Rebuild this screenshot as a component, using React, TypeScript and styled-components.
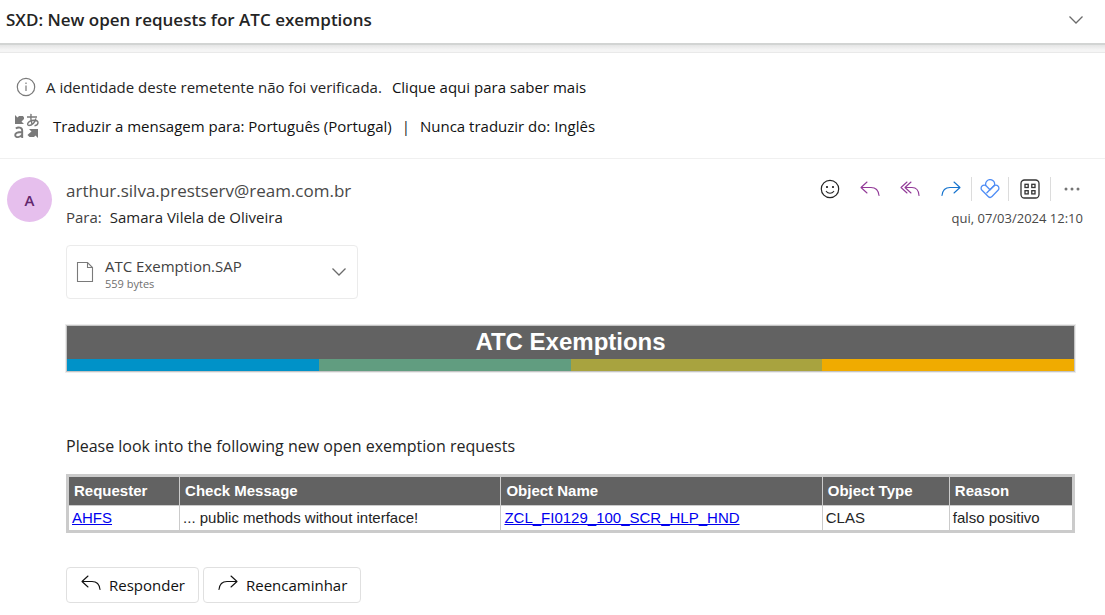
import React from "react";
import styled, { createGlobalStyle } from "styled-components";

const GlobalStyle = createGlobalStyle`
  * { box-sizing: border-box; }
  body {
    margin: 0;
    background: #ffffff;
    color: #242424;
    font-family: "Open Sans", "Noto Sans", sans-serif;
    font-size: 15px;
    line-height: 20px;
  }
  button { font: inherit; color: inherit; background: none; border: 0; padding: 0; cursor: pointer; }
`;

const Header = styled.header`
  display: flex;
  align-items: center;
  justify-content: space-between;
  height: 43px;
  padding: 0 21px 3px 6px;
`;

const Subject = styled.h1`
  margin: 0;
  font-size: 17px;
  line-height: 24px;
  font-weight: 600;
`;

const IconButton = styled.button<{ $color?: string }>`
  && {
    display: flex;
    align-items: center;
    justify-content: center;
    color: ${(p) => p.$color ?? "#6b6b6b"};
  }
`;

const Divider = styled.div`
  height: 10px;
  border-top: 2px solid #d2d4d3;
  border-bottom: 1px solid #e9e9e9;
  background: linear-gradient(#e4e5e5, #f5f5f5 70%);
`;

const Notices = styled.section`
  display: flex;
  flex-direction: column;
  gap: 12px;
  padding: 20px 14px 19px;
  border-bottom: 1px solid #f0f0f0;
`;

const Notice = styled.div<{ $gap: number }>`
  display: flex;
  align-items: center;
  gap: ${(p) => p.$gap}px;
  min-height: 27px;
  color: #242424;
`;

const NoticeIcon = styled.span<{ $width: number }>`
  display: flex;
  justify-content: center;
  width: ${(p) => p.$width}px;
  color: #7a7a7a;
`;

const NoticeText = styled.span`
  display: flex;
  gap: 10px;
`;

const PlainLink = styled.a`
  color: #111111;
  text-decoration: none;
`;

const Message = styled.main`
  display: grid;
  grid-template-columns: 46px minmax(0, 1fr);
  column-gap: 13px;
  padding: 18px 22px 0 7px;
`;

const Avatar = styled.div`
  display: flex;
  align-items: center;
  justify-content: center;
  width: 45px;
  height: 45px;
  border-radius: 50%;
  background: #e6bfed;
  color: #63276d;
  font-weight: 600;
`;

const MessageHead = styled.div`
  display: flex;
  justify-content: space-between;
`;

const Sender = styled.div`
  padding-top: 2px;
  font-size: 17px;
  line-height: 24px;
  color: #484848;
`;

const Recipients = styled.div`
  display: flex;
  gap: 8px;
  padding-top: 4px;
  color: #424242;
`;

const Recipient = styled.span`
  color: #242424;
`;

const Aside = styled.div`
  display: flex;
  flex-direction: column;
  align-items: flex-end;
`;

const Toolbar = styled.div`
  display: flex;
  align-items: center;
  height: 24px;
  margin-right: -9px;
`;

const ToolSlot = styled.div<{ $width: number; $ruled?: boolean }>`
  display: flex;
  align-items: center;
  justify-content: center;
  width: ${(p) => p.$width}px;
  height: 24px;
  border-left: ${(p) => (p.$ruled ? "1px solid #dcdcdc" : "0")};
`;

const Sent = styled.time`
  padding-top: 7px;
  font-size: 13px;
  color: #484848;
`;

const Attachment = styled.div`
  display: flex;
  align-items: center;
  width: 292px;
  height: 54px;
  margin-top: 17px;
  padding: 0 10px 0 9px;
  border: 1px solid #ebebeb;
  border-radius: 4px;
`;

const AttachmentInfo = styled.div`
  flex: 1;
  padding: 3px 0 0 11px;
`;

const FileName = styled.div`
  line-height: 20px;
  color: #424242;
`;

const FileSize = styled.div`
  font-size: 11px;
  line-height: 16px;
  font-weight: 500;
  color: #707070;
`;

const Body = styled.article`
  padding-right: 8px;
`;

const Banner = styled.div`
  display: grid;
  grid-template-columns: repeat(4, 1fr);
  margin-top: 26px;
  border: 1px solid #c4c4c4;
  outline: 1px solid #ececec;
`;

const BannerTitle = styled.h2`
  grid-column: 1 / -1;
  margin: 0;
  padding-bottom: 1px;
  background: #626262;
  color: #ffffff;
  font: bold 24px/32px "Liberation Sans", Arial, sans-serif;
  text-align: center;
`;

const Stripe = styled.div<{ $color: string }>`
  height: 12px;
  background: ${(p) => p.$color};
`;

const Intro = styled.p`
  margin: 62px 0 16px;
  font-size: 16px;
  line-height: 24px;
`;

const Table = styled.table`
  width: 100%;
  table-layout: fixed;
  border: 2px solid #cbcbcb;
  border-collapse: separate;
  border-spacing: 1px;
  background: #cbcbcb;
  font: 15px/20px "Liberation Sans", Arial, sans-serif;
`;

const HeadCell = styled.th<{ $width: string }>`
  width: ${(p) => p.$width};
  height: 28px;
  padding: 0 5px;
  background: #626262;
  color: #ffffff;
  text-align: left;
`;

const Cell = styled.td`
  height: 24px;
  padding: 0 3px;
  background: #ffffff;
`;

const TableLink = styled.a`
  color: #0000ee;
`;

const Actions = styled.div`
  display: flex;
  gap: 4px;
  margin-top: 34px;
`;

const ActionButton = styled.button`
  && {
    display: flex;
    align-items: center;
    gap: 8px;
    height: 36px;
    padding: 0 13px 0 14px;
    border: 1px solid #e0e0e0;
    border-radius: 4px;
    font-weight: 500;
    color: #111111;
  }
  svg {
    margin-bottom: 4px;
  }
`;

const Chevron = () => (
  <svg width="16" height="10" viewBox="0 0 16 10" fill="none" stroke="currentColor" strokeWidth="1.3">
    <path d="M1.500 1.500 8 8l6.500-6.500" />
  </svg>
);

const ReplyIcon = () => (
  <svg width="20" height="16" viewBox="0 0 20 16" fill="none" stroke="currentColor" strokeWidth="1.1" strokeLinecap="round" strokeLinejoin="round">
    <path d="M7 1 1 6.500 7 12M1.300 6.500H11c4.500 0 7.500 3 8 8" />
  </svg>
);

const ReplyAllIcon = () => (
  <svg width="20" height="16" viewBox="0 0 20 16" fill="none" stroke="currentColor" strokeWidth="1.1" strokeLinecap="round" strokeLinejoin="round">
    <path d="M7 1 1 6.500 7 12M11 1 5 6.500 11 12M5.300 6.500H12c4 0 6.700 3 7 8" />
  </svg>
);

const ForwardIcon = () => (
  <svg width="20" height="16" viewBox="0 0 20 16" fill="none" stroke="currentColor" strokeWidth="1.1" strokeLinecap="round" strokeLinejoin="round">
    <path d="m13 1 6 5.500L13 12M18.700 6.500H9C4.500 6.500 1.500 9.500 1 14.500" />
  </svg>
);

const SmileIcon = () => (
  <svg width="20" height="20" viewBox="0 0 20 20" fill="none" stroke="currentColor" strokeWidth="1.2" strokeLinecap="round">
    <circle cx="10" cy="10" r="8.700" />
    <path d="M6.300 12.500c1.800 2.300 5.600 2.300 7.400 0" />
    <circle cx="7" cy="8" r=".5" fill="currentColor" />
    <circle cx="13" cy="8" r=".5" fill="currentColor" />
  </svg>
);

const VivaIcon = () => (
  <svg width="20" height="20" viewBox="0 0 20 20" fill="none" stroke="currentColor" strokeWidth="1.3" strokeLinecap="round" strokeLinejoin="round">
    <path d="M5.800 6.300a4.500 4.500 0 1 1 8.600.2" />
    <path d="M10 10.700 6.300 7a3 3 0 0 0-4.300 0 3 3 0 0 0 0 4.300l6.200 6.200a2.700 2.700 0 0 0 3.800 0l6-6.200a3 3 0 0 0 0-4.300 3 3 0 0 0-4.300 0l-6.800 6.800" />
    <path d="M14.400 6.500 10 10.700" />
  </svg>
);

const AppsIcon = () => (
  <svg width="20" height="20" viewBox="0 0 20 20" fill="none" stroke="currentColor" strokeWidth="1.3">
    <rect x="1" y="1" width="18" height="18" rx="3.500" />
    <rect x="5" y="5.300" width="3.200" height="3.200" />
    <rect x="11.800" y="5.300" width="3.200" height="3.200" />
    <rect x="5" y="11.700" width="3.200" height="3.200" />
    <rect x="11.800" y="11.700" width="3.200" height="3.200" />
  </svg>
);

const MoreIcon = () => (
  <svg width="16" height="4" viewBox="0 0 16 4" fill="currentColor">
    <circle cx="2" cy="2" r="1.500" />
    <circle cx="8" cy="2" r="1.500" />
    <circle cx="14" cy="2" r="1.500" />
  </svg>
);

const InfoIcon = () => (
  <svg width="20" height="20" viewBox="0 0 20 20" fill="none" stroke="currentColor" strokeWidth="1.200">
    <circle cx="10" cy="10" r="8.700" />
    <path d="M10 8.500V14M10 5.500v1.500" />
  </svg>
);

const TranslateIcon = () => (
  <svg width="26" height="26" viewBox="0 0 26 26" fill="none" stroke="currentColor" strokeWidth="1.400">
    <path d="M1 2v9h9L7.500 8.500 10 6V4.500L9 3H5L3.500 4.500zM24 25v-9h-9l2.500 2.500L14.500 21l-1 1 2 2H20l1.500-1.500z" fill="currentColor" stroke="none" />
    <path d="M13 4h10M17 .8c-.5 4 0 7.500 1 10.500M22 5.500c-1.500 4.500-4.500 7-7 7-2.500 0-2-4.700 5-5.200 5.500 0 5 4.700.5 5.400" />
    <path d="M1.800 15.500c2.500-1.800 6.400-1.200 6.400 2V25M8.200 19c-3.200 0-7 .2-7 3.100 0 3 5.500 2.600 7-.7" strokeWidth="1.900" />
  </svg>
);

const FileIcon = () => (
  <svg width="18" height="22" viewBox="0 0 18 22" fill="none" stroke="currentColor" strokeWidth="1.100">
    <path d="M1.500 1.500h10L16.500 6.500v14h-15zM11.500 1.500v5h5" />
  </svg>
);

const columns = [
  { label: "Requester", width: "11%" },
  { label: "Check Message", width: "32%" },
  { label: "Object Name", width: "32%" },
  { label: "Object Type", width: "12.6%" },
  { label: "Reason", width: "12.2%" },
];

const stripes = ["#0092c8", "#619d80", "#a8a33f", "#f0ab00"];

export default function App() {
  return (
    <>
      <GlobalStyle />
      <Header>
        <Subject>SXD: New open requests for ATC exemptions</Subject>
        <IconButton aria-label="Expandir"><Chevron /></IconButton>
      </Header>
      <Divider />
      <Notices>
        <Notice $gap={8}>
          <NoticeIcon $width={24}><InfoIcon /></NoticeIcon>
          <NoticeText>
            <span>A identidade deste remetente não foi verificada.</span>
            <PlainLink href="#saber-mais">Clique aqui para saber mais</PlainLink>
          </NoticeText>
        </Notice>
        <Notice $gap={13}>
          <NoticeIcon $width={26}><TranslateIcon /></NoticeIcon>
          <NoticeText>
            <PlainLink href="#traduzir">Traduzir a mensagem para: Português (Portugal)</PlainLink>
            <span>|</span>
            <PlainLink href="#nunca">Nunca traduzir do: Inglês</PlainLink>
          </NoticeText>
        </Notice>
      </Notices>
      <Message>
        <Avatar>A</Avatar>
        <div>
          <MessageHead>
            <div>
              <Sender>arthur.silva.prestserv@ream.com.br</Sender>
              <Recipients>
                <span>Para:</span>
                <Recipient>Samara Vilela de Oliveira</Recipient>
              </Recipients>
            </div>
            <Aside>
              <Toolbar>
                <ToolSlot $width={40}><IconButton aria-label="Reagir" $color="#242424"><SmileIcon /></IconButton></ToolSlot>
                <ToolSlot $width={40}><IconButton aria-label="Responder" $color="#923a98"><ReplyIcon /></IconButton></ToolSlot>
                <ToolSlot $width={40}><IconButton aria-label="Responder a todos" $color="#923a98"><ReplyAllIcon /></IconButton></ToolSlot>
                <ToolSlot $width={41}><IconButton aria-label="Reencaminhar" $color="#1573ce"><ForwardIcon /></IconButton></ToolSlot>
                <ToolSlot $width={37} $ruled><IconButton aria-label="Viva" $color="#4f8df5"><VivaIcon /></IconButton></ToolSlot>
                <ToolSlot $width={42} $ruled><IconButton aria-label="Aplicações" $color="#333333"><AppsIcon /></IconButton></ToolSlot>
                <ToolSlot $width={42} $ruled><IconButton aria-label="Mais ações" $color="#757575"><MoreIcon /></IconButton></ToolSlot>
              </Toolbar>
              <Sent dateTime="2024-03-07T12:10">qui, 07/03/2024 12:10</Sent>
            </Aside>
          </MessageHead>
          <Body>
            <Attachment>
              <NoticeIcon $width={18}><FileIcon /></NoticeIcon>
              <AttachmentInfo>
                <FileName>ATC Exemption.SAP</FileName>
                <FileSize>559 bytes</FileSize>
              </AttachmentInfo>
              <IconButton aria-label="Opções do anexo"><Chevron /></IconButton>
            </Attachment>
            <Banner>
              <BannerTitle>ATC Exemptions</BannerTitle>
              {stripes.map((color) => <Stripe key={color} $color={color} />)}
            </Banner>
            <Intro>Please look into the following new open exemption requests</Intro>
            <Table>
              <thead>
                <tr>
                  {columns.map((c) => <HeadCell key={c.label} $width={c.width} scope="col">{c.label}</HeadCell>)}
                </tr>
              </thead>
              <tbody>
                <tr>
                  <Cell><TableLink href="#ahfs">AHFS</TableLink></Cell>
                  <Cell>... public methods without interface!</Cell>
                  <Cell><TableLink href="#object">ZCL_FI0129_100_SCR_HLP_HND</TableLink></Cell>
                  <Cell>CLAS</Cell>
                  <Cell>falso positivo</Cell>
                </tr>
              </tbody>
            </Table>
            <Actions>
              <ActionButton><ReplyIcon />Responder</ActionButton>
              <ActionButton><ForwardIcon />Reencaminhar</ActionButton>
            </Actions>
          </Body>
        </div>
      </Message>
    </>
  );
}
